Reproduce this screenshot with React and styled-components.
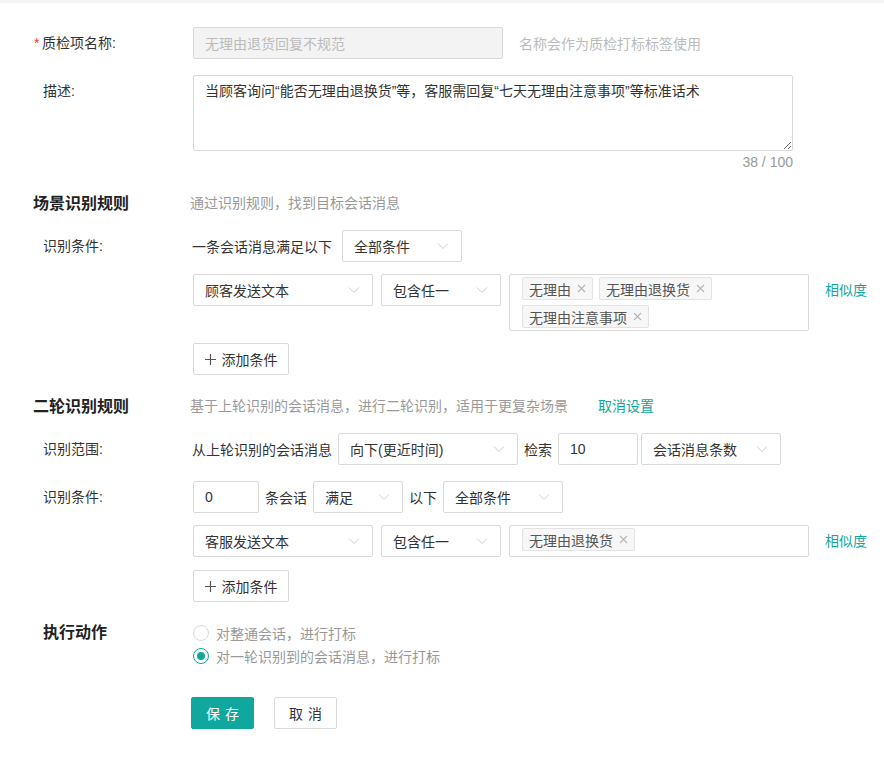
import React from 'react'
import styled, { createGlobalStyle } from 'styled-components'

const TEAL = '#10a89e'

const GlobalStyle = createGlobalStyle`
  html, body {
    margin: 0;
    padding: 0;
    background: #fff;
  }
  body {
    font-family: "Liberation Sans", "Noto Sans CJK SC", sans-serif;
    font-size: 14px;
    color: #333;
  }
  * { box-sizing: border-box; }
`

const Page = styled.div`
  width: 884px;
  height: 759px;
  overflow: hidden;
  display: flex;
  flex-direction: column;
`

const TopStrip = styled.div`
  height: 3px;
  background: #f3f4f5;
`

const FieldRow = styled.div`
  display: grid;
  grid-template-columns: 193px 1fr;
  align-items: ${p => (p.$top ? 'start' : 'center')};
  margin-top: ${p => p.$mt || 0}px;
`

const Label = styled.div`
  padding-left: 43px;
  font-size: 14px;
  line-height: 20px;
  color: #333;
  padding-top: ${p => p.$pt || 0}px;
`

const Star = styled.span`
  display: inline-block;
  width: 8px;
  color: #f04134;
  margin-left: -9px;
`

const Inline = styled.div`
  display: flex;
  align-items: center;
  gap: ${p => (p.$gap == null ? 6 : p.$gap)}px;
`

const TextInput = styled.div`
  width: ${p => p.$w}px;
  height: 32px;
  border: 1px solid #d9d9d9;
  border-radius: 2px;
  background: ${p => (p.$disabled ? '#f3f3f3' : '#fff')};
  color: ${p => (p.$disabled ? '#bbb' : '#333')};
  padding: 0 11px;
  display: flex;
  align-items: center;
  font-size: 14px;
  flex-shrink: 0;
`

const Hint = styled.span`
  color: #bbb;
  font-size: 14px;
  margin-left: 10px;
`

const Area = styled.textarea`
  width: 600px;
  height: 76px;
  border: 1px solid #d9d9d9;
  border-radius: 2px;
  padding: 4px 11px;
  font-family: inherit;
  font-size: 14px;
  line-height: 22px;
  color: #333;
  outline: none;
  display: block;
`

const Counter = styled.div`
  width: 600px;
  text-align: right;
  color: #999;
  font-size: 14px;
  line-height: 20px;
`

const SectionRow = styled.div`
  display: flex;
  align-items: center;
  margin-top: ${p => p.$mt || 0}px;
  height: 24px;
`

const SectionTitle = styled.div`
  width: 190px;
  padding-left: 33px;
  font-size: 16px;
  font-weight: 700;
  color: #222;
`

const SectionSub = styled.span`
  color: #999;
  font-size: 14px;
`

const LinkText = styled.span`
  color: ${TEAL};
  font-size: 14px;
  margin-left: ${p => p.$ml || 0}px;
  cursor: pointer;
`

const Text = styled.span`
  color: #333;
  font-size: 14px;
  white-space: nowrap;
  margin-left: ${p => p.$ml || 0}px;
`

const SelectBox = styled.div`
  width: ${p => p.$w}px;
  height: 32px;
  margin-left: ${p => p.$ml || 0}px;
  border: 1px solid #d9d9d9;
  border-radius: 2px;
  background: #fff;
  padding: 0 12px 0 11px;
  display: flex;
  align-items: center;
  justify-content: space-between;
  font-size: 14px;
  color: #333;
  flex-shrink: 0;
`

const Chevron = () => (
  <svg width="12" height="8" viewBox="0 0 12 8" fill="none">
    <path d="M1 1.5 L6 6.5 L11 1.5" stroke="#ccc" strokeWidth="1" />
  </svg>
)

const Select = ({ w, ml, children }) => (
  <SelectBox $w={w} $ml={ml}>
    <span>{children}</span>
    <Chevron />
  </SelectBox>
)

const CondRow = styled.div`
  display: flex;
  align-items: flex-start;
  gap: 8px;
`

const TagBox = styled.div`
  width: 300px;
  min-height: 32px;
  border: 1px solid #d9d9d9;
  border-radius: 2px;
  padding: 2px 12px 2px 12px;
  display: flex;
  flex-wrap: wrap;
  gap: 5px 6px;
  align-content: flex-start;
`

const Tag = styled.span`
  height: 23px;
  display: inline-flex;
  align-items: center;
  gap: 6px;
  padding: 0 6px;
  background: #f7f7f7;
  border: 1px solid #e3e3e3;
  border-radius: 2px;
  color: #555;
  font-size: 14px;
`

const Close = () => (
  <svg width="9" height="9" viewBox="0 0 9 9">
    <path d="M1 1 L8 8 M8 1 L1 8" stroke="#b5b5b5" strokeWidth="1.1" />
  </svg>
)

const Similar = styled(LinkText)`
  line-height: 32px;
  margin-left: 8px;
`

const AddButton = styled.button`
  width: 96px;
  height: 32px;
  border: 1px solid #d9d9d9;
  border-radius: 2px;
  background: #fff;
  font-family: inherit;
  font-size: 14px;
  color: #333;
  display: flex;
  align-items: center;
  justify-content: center;
  gap: 6px;
  padding: 0;
`

const Plus = () => (
  <svg width="11" height="11" viewBox="0 0 11 11">
    <path d="M5.5 0 V11 M0 5.5 H11" stroke="#555" strokeWidth="1.2" />
  </svg>
)

const Stack = styled.div`
  display: flex;
  flex-direction: column;
  gap: ${p => p.$gap || 0}px;
`

const ActionTitle = styled.div`
  padding-left: 43px;
  font-size: 16px;
  font-weight: 700;
  color: #222;
  line-height: 23px;
`

const RadioLine = styled.label`
  display: flex;
  align-items: center;
  gap: 7px;
  height: 23px;
  color: #999;
  font-size: 14px;
`

const RadioDot = styled.span`
  width: 16px;
  height: 16px;
  border-radius: 50%;
  border: 1px solid ${p => (p.$on ? TEAL : '#d9d9d9')};
  display: flex;
  align-items: center;
  justify-content: center;
  &::after {
    content: '';
    width: 8px;
    height: 8px;
    border-radius: 50%;
    background: ${p => (p.$on ? TEAL : 'transparent')};
  }
`

const Footer = styled.div`
  display: flex;
  gap: 20px;
  margin-top: 30px;
  padding-left: 191px;
`

const Btn = styled.button`
  width: 63px;
  height: 32px;
  border-radius: 2px;
  font-family: inherit;
  font-size: 14px;
  letter-spacing: 5px;
  padding: 0 0 0 5px;
  border: 1px solid ${p => (p.$primary ? TEAL : '#d9d9d9')};
  background: ${p => (p.$primary ? TEAL : '#fff')};
  color: ${p => (p.$primary ? '#fff' : '#333')};
`

function App() {
  return (
    <Page>
      <GlobalStyle />
      <TopStrip />

      <FieldRow $mt={24}>
        <Label><Star>*</Star>质检项名称:</Label>
        <Inline $gap={6}>
          <TextInput $w={310} $disabled>无理由退货回复不规范</TextInput>
          <Hint>名称会作为质检打标标签使用</Hint>
        </Inline>
      </FieldRow>

      <FieldRow $mt={16} $top>
        <Label $pt={6}>描述:</Label>
        <div>
          <Area readOnly value="当顾客询问“能否无理由退换货”等，客服需回复“七天无理由注意事项”等标准话术" />
        </div>
      </FieldRow>
      <FieldRow $mt={1}>
        <span />
        <Counter>38 / 100</Counter>
      </FieldRow>

      <SectionRow $mt={18}>
        <SectionTitle>场景识别规则</SectionTitle>
        <SectionSub>通过识别规则，找到目标会话消息</SectionSub>
      </SectionRow>

      <FieldRow $mt={16}>
        <Label>识别条件:</Label>
        <Inline $gap={10}>
          <Text $ml={-1}>一条会话消息满足以下</Text>
          <Select w={120}>全部条件</Select>
        </Inline>
      </FieldRow>

      <FieldRow $mt={12} $top>
        <span />
        <CondRow>
          <Select w={180}>顾客发送文本</Select>
          <Select w={120}>包含任一</Select>
          <TagBox>
            <Tag>无理由<Close /></Tag>
            <Tag>无理由退换货<Close /></Tag>
            <Tag>无理由注意事项<Close /></Tag>
          </TagBox>
          <Similar>相似度</Similar>
        </CondRow>
      </FieldRow>

      <FieldRow $mt={12}>
        <span />
        <div><AddButton><Plus />添加条件</AddButton></div>
      </FieldRow>

      <SectionRow $mt={18}>
        <SectionTitle>二轮识别规则</SectionTitle>
        <SectionSub>基于上轮识别的会话消息，进行二轮识别，适用于更复杂场景</SectionSub>
        <LinkText $ml={30}>取消设置</LinkText>
      </SectionRow>

      <FieldRow $mt={16}>
        <Label>识别范围:</Label>
        <Inline $gap={6}>
          <Text $ml={-1}>从上轮识别的会话消息</Text>
          <Select w={180}>向下(更近时间)</Select>
          <Text>检索</Text>
          <TextInput $w={80}>10</TextInput>
          <Select w={140} ml={-3}>会话消息条数</Select>
        </Inline>
      </FieldRow>

      <FieldRow $mt={16}>
        <Label>识别条件:</Label>
        <Inline $gap={6}>
          <TextInput $w={66}>0</TextInput>
          <Text>条会话</Text>
          <Select w={90}>满足</Select>
          <Text>以下</Text>
          <Select w={120}>全部条件</Select>
        </Inline>
      </FieldRow>

      <FieldRow $mt={12} $top>
        <span />
        <CondRow>
          <Select w={180}>客服发送文本</Select>
          <Select w={120}>包含任一</Select>
          <TagBox>
            <Tag>无理由退换货<Close /></Tag>
          </TagBox>
          <Similar>相似度</Similar>
        </CondRow>
      </FieldRow>

      <FieldRow $mt={13}>
        <span />
        <div><AddButton><Plus />添加条件</AddButton></div>
      </FieldRow>

      <FieldRow $mt={19} $top>
        <ActionTitle>执行动作</ActionTitle>
        <Stack>
          <RadioLine><RadioDot />对整通会话，进行打标</RadioLine>
          <RadioLine><RadioDot $on />对一轮识别到的会话消息，进行打标</RadioLine>
        </Stack>
      </FieldRow>

      <Footer>
        <Btn $primary>保存</Btn>
        <Btn>取消</Btn>
      </Footer>
    </Page>
  )
}

export default App
